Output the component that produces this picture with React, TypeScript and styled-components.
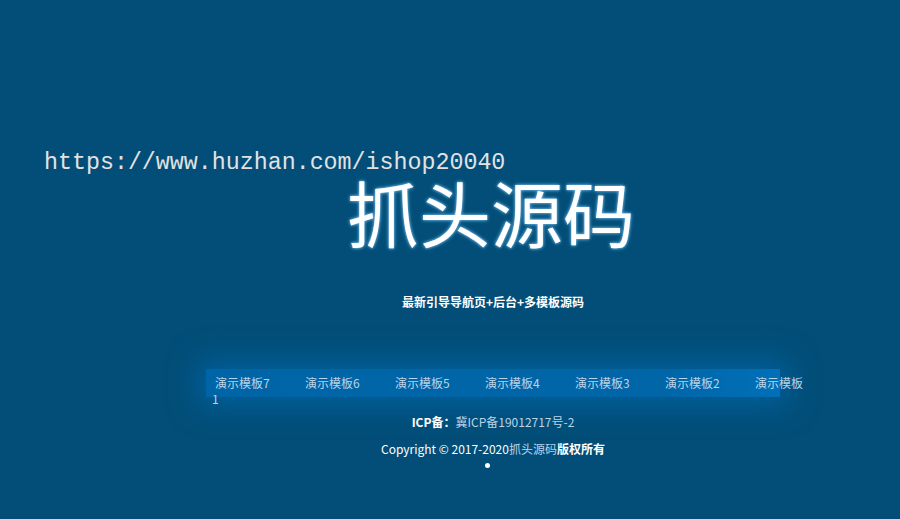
import React from "react";
import styled, { createGlobalStyle } from "styled-components";

const Global = createGlobalStyle`
  html, body { margin: 0; padding: 0; }
  body {
    width: 900px;
    height: 519px;
    overflow: hidden;
    background: #024e78;
    font-family: "Noto Sans", "Noto Sans CJK SC", sans-serif;
  }
`;

const Page = styled.div`
  position: relative;
  width: 900px;
  height: 519px;
  background: #024e78;
  overflow: hidden;
`;

const Watermark = styled.div`
  position: absolute;
  left: 44px;
  top: 148px;
  font-family: "Liberation Mono", monospace;
  font-size: 23.3px;
  line-height: 30px;
  color: #e2e2e2;
  white-space: nowrap;
`;

const Column = styled.div`
  margin-left: 206px;
  width: 574px;
  padding-top: 175px;
  display: flex;
  flex-direction: column;
  align-items: center;
`;

const Title = styled.h1`
  margin: 0;
  font-family: "Noto Sans CJK SC", sans-serif;
  font-weight: 400;
  font-size: 72px;
  line-height: 72px;
  color: #ffffff;
  text-shadow: 0 0 3px #8fd0ff, 0 0 5px rgba(120, 200, 255, 0.4);
  transform: translateX(-2px);
`;

const Subtitle = styled.p`
  margin: 47px 0 0;
  font-family: "Noto Sans CJK SC", sans-serif;
  font-weight: 700;
  font-size: 12px;
  line-height: 16px;
  color: #ffffff;
`;

const NavBar = styled.nav`
  align-self: stretch;
  margin-top: 59px;
  height: 28px;
  box-sizing: border-box;
  padding: 6px 0 0 6px;
  background: linear-gradient(90deg, #0065a6 0%, #0066a8 80%, #0070b8 100%);
  box-shadow: 0 0 30px 8px rgba(0, 115, 195, 0.5);
  font-family: "Noto Sans CJK SC", sans-serif;
  font-size: 12px;
  line-height: 16px;
  color: #b9d3e8;
  white-space: nowrap;
`;

const NavItem = styled.a<{ $last?: boolean }>`
  display: ${(p) => (p.$last ? "inline" : "inline-block")};
  width: ${(p) => (p.$last ? "auto" : "90px")};
  box-sizing: border-box;
  padding-left: 3px;
  color: inherit;
  text-decoration: none;
`;

const IcpLine = styled.p`
  margin: 17px 0 0;
  font-family: "Noto Sans CJK SC", sans-serif;
  font-size: 12px;
  line-height: 16px;
  color: #b9d3e8;
`;

const Strong = styled.span`
  font-weight: 700;
  color: #ffffff;
`;

const CopyLine = styled.p`
  margin: 11px 0 0;
  font-family: "Noto Sans CJK SC", sans-serif;
  font-size: 12px;
  line-height: 16px;
  color: #ffffff;
`;

const Link = styled.span`
  color: #b9d3e8;
`;

const Dot = styled.span`
  display: block;
  margin-top: 6px;
  width: 5px;
  height: 5px;
  border-radius: 50%;
  background: #ffffff;
  transform: translateX(-6px);
`;

const items = ["演示模板7", "演示模板6", "演示模板5", "演示模板4", "演示模板3", "演示模板2"];

export default function App() {
  return (
    <Page>
      <Global />
      <Column>
        <Title>抓头源码</Title>
        <Subtitle>最新引导导航页+后台+多模板源码</Subtitle>
        <NavBar>
          {items.map((t) => (
            <NavItem key={t}>{t}</NavItem>
          ))}
          <NavItem $last>
            演示模板
            <br />1
          </NavItem>
        </NavBar>
        <IcpLine>
          <Strong>ICP备：</Strong>冀ICP备19012717号-2
        </IcpLine>
        <CopyLine>
          Copyright © 2017-2020<Link>抓头源码</Link>
          <Strong>版权所有</Strong>
        </CopyLine>
        <Dot />
      </Column>
      <Watermark>https://www.huzhan.com/ishop20040</Watermark>
    </Page>
  );
}
